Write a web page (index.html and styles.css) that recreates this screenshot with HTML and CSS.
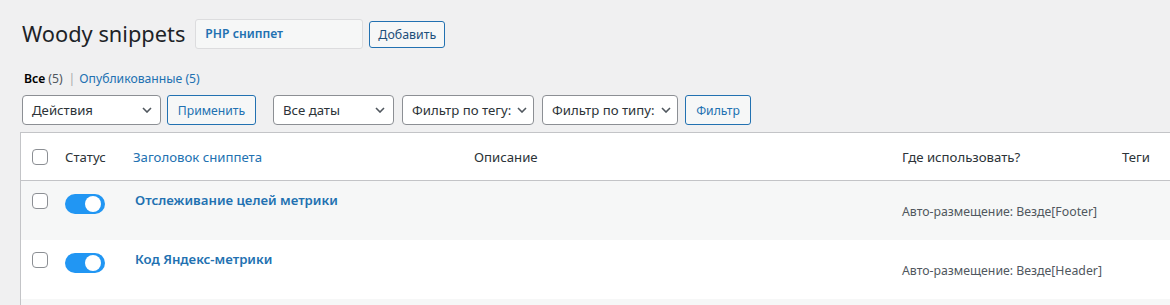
FILE: index.html
```html
<!DOCTYPE html>
<html lang="ru">
<head>
    <meta charset="UTF-8">
    <meta name="viewport" content="width=device-width, initial-scale=1.0">
    <title>Woody snippets</title>
    <link rel="stylesheet" href="styles.css">
</head>
<body>
    <div class="wrap">
        <div class="page-head">
            <h1>Woody snippets</h1>
            <div class="snippet-type">PHP сниппет</div>
            <a href="#" class="add-btn">Добавить</a>
        </div>

        <ul class="subsubsub">
            <li><a href="#" class="current">Все <span class="count">(5)</span></a></li>
            <li class="sep">|</li>
            <li><a href="#">Опубликованные <span class="count">(5)</span></a></li>
        </ul>

        <div class="tablenav">
            <div class="fake-select w-actions">
                <span>Действия</span>
                <svg width="10" height="6" viewBox="0 0 10 6"><path d="M1 1l4 4 4-4" fill="none" stroke="#50575e" stroke-width="1.6"/></svg>
            </div>
            <button class="button btn-apply">Применить</button>
            <div class="fake-select w-dates">
                <span>Все даты</span>
                <svg width="10" height="6" viewBox="0 0 10 6"><path d="M1 1l4 4 4-4" fill="none" stroke="#50575e" stroke-width="1.6"/></svg>
            </div>
            <div class="fake-select w-tag">
                <span>Фильтр по тегу:</span>
                <svg width="10" height="6" viewBox="0 0 10 6"><path d="M1 1l4 4 4-4" fill="none" stroke="#50575e" stroke-width="1.6"/></svg>
            </div>
            <div class="fake-select w-type">
                <span>Фильтр по типу:</span>
                <svg width="10" height="6" viewBox="0 0 10 6"><path d="M1 1l4 4 4-4" fill="none" stroke="#50575e" stroke-width="1.6"/></svg>
            </div>
            <button class="button btn-filter">Фильтр</button>
        </div>

        <table class="snippets">
            <thead>
                <tr>
                    <th class="col-check"><span class="checkbox"></span></th>
                    <th class="col-status">Статус</th>
                    <th class="col-title"><a href="#">Заголовок сниппета</a></th>
                    <th class="col-desc">Описание</th>
                    <th class="col-where">Где использовать?</th>
                    <th class="col-tags">Теги</th>
                </tr>
            </thead>
            <tbody>
                <tr class="alt">
                    <td class="col-check"><span class="checkbox"></span></td>
                    <td class="col-status"><span class="toggle"></span></td>
                    <td class="col-title"><a href="#" class="row-title">Отслеживание целей метрики</a></td>
                    <td class="col-desc"></td>
                    <td class="col-where"><span class="where">Авто-размещение: Везде[Footer]</span></td>
                    <td class="col-tags"></td>
                </tr>
                <tr>
                    <td class="col-check"><span class="checkbox"></span></td>
                    <td class="col-status"><span class="toggle"></span></td>
                    <td class="col-title"><a href="#" class="row-title">Код Яндекс-метрики</a></td>
                    <td class="col-desc"></td>
                    <td class="col-where"><span class="where">Авто-размещение: Везде[Header]</span></td>
                    <td class="col-tags"></td>
                </tr>
                <tr class="alt">
                    <td class="col-check"></td>
                    <td class="col-status"></td>
                    <td class="col-title"></td>
                    <td class="col-desc"></td>
                    <td class="col-where"></td>
                    <td class="col-tags"></td>
                </tr>
            </tbody>
        </table>
    </div>
</body>
</html>
```

FILE: styles.css
```css
html, body {
    margin: 0;
    background-color: #f0f0f1;
    overflow: hidden;
}
body {
    font-family: "Noto Sans", "Open Sans", sans-serif;
    font-size: 12.2px;
    color: #3c434a;
}
a {
    color: #2271b1;
    text-decoration: none;
}
.wrap {
    padding: 10px 0 0 20px;
}
.page-head {
    display: flex;
    align-items: center;
    height: 48px;
}
h1 {
    margin: 0 10px 0 2px;
    font-size: 21.8px;
    font-weight: 400;
    color: #1d2327;
    line-height: 30px;
}
.snippet-type {
    width: 157px;
    height: 28px;
    line-height: 28px;
    padding: 0 0 0 9px;
    background-color: #f6f7f7;
    border: 1px solid #dcdcde;
    border-radius: 3px;
    color: #2271b1;
    font-weight: 600;
}
.add-btn {
    margin-left: 6px;
    height: 25px;
    line-height: 25px;
    padding: 0 8px;
    border: 1px solid #2271b1;
    border-radius: 3px;
    background-color: #f6f7f7;
    color: #1d4f7a;
    font-size: 12.4px;
}
.subsubsub {
    list-style: none;
    display: flex;
    margin: 11px 0 0 4px;
    padding: 0;
    height: 20px;
    line-height: 20px;
}
.subsubsub .current {
    color: #000;
    font-weight: 600;
}
.subsubsub .current .count {
    font-weight: 400;
    color: #50575e;
}
.subsubsub .sep {
    color: #a7aaad;
    margin: 0 4px 0 6px;
}
.tablenav {
    display: flex;
    align-items: center;
    margin-top: 6px;
    height: 30px;
}
.fake-select {
    box-sizing: border-box;
    height: 30px;
    display: flex;
    align-items: center;
    justify-content: space-between;
    padding: 0 8px 0 9px;
    background-color: #fff;
    border: 1px solid #8c8f94;
    border-radius: 4px;
    color: #2c3338;
    font-size: 13.2px;
}
.w-actions { width: 139px; margin-left: 2px; }
.w-dates { width: 121px; margin-left: 17px; }
.w-tag { width: 132px; margin-left: 8px; padding-right: 6px; }
.w-type { width: 136px; margin-left: 8px; padding-right: 6px; }
.button {
    box-sizing: border-box;
    height: 30px;
    margin-left: 6px;
    padding: 0;
    text-align: center;
    font-family: inherit;
    font-size: 12.2px;
    color: #2271b1;
    background-color: #f6f7f7;
    border: 1px solid #2271b1;
    border-radius: 3px;
}
.btn-apply {
    width: 89px;
}
.btn-filter {
    width: 66px;
    margin-left: 7px;
}
.snippets {
    margin-top: 7px;
    border-collapse: collapse;
    table-layout: fixed;
    width: 1200px;
    background-color: #fff;
    border: 1px solid #c3c4c7;
}
.snippets th, .snippets td {
    padding: 0;
    text-align: left;
    vertical-align: top;
}
.snippets th {
    height: 47px;
    vertical-align: middle;
    font-weight: 400;
    font-size: 13.2px;
    color: #2c3338;
    border-bottom: 1px solid #c3c4c7;
}
.snippets td {
    height: 59px;
}
.snippets tr.alt td {
    background-color: #f6f7f7;
}
.col-check { width: 44px; }
.col-status { width: 68px; }
.col-title { width: 341px; }
.col-desc { width: 428px; }
.col-where { width: 220px; }
.col-tags { width: 98px; }
.checkbox {
    display: block;
    box-sizing: border-box;
    width: 16px;
    height: 16px;
    margin-left: 11px;
    border: 1px solid #8c8f94;
    border-radius: 4px;
    background-color: #fff;
}
.snippets td .checkbox {
    margin-top: 12px;
}
.toggle {
    display: block;
    position: relative;
    width: 40px;
    height: 20px;
    margin-top: 13px;
    border-radius: 10px;
    background-color: #2196f3;
}
.toggle::after {
    content: "";
    position: absolute;
    right: 4px;
    top: 2px;
    width: 16px;
    height: 16px;
    border-radius: 50%;
    background-color: #fff;
}
.row-title {
    display: block;
    margin: 9px 0 0 2px;
    font-size: 13.2px;
    font-weight: 600;
    line-height: 20px;
}
.where {
    display: block;
    margin-top: 22px;
    font-size: 12.3px;
    line-height: 18px;
    color: #50575e;
}
```
